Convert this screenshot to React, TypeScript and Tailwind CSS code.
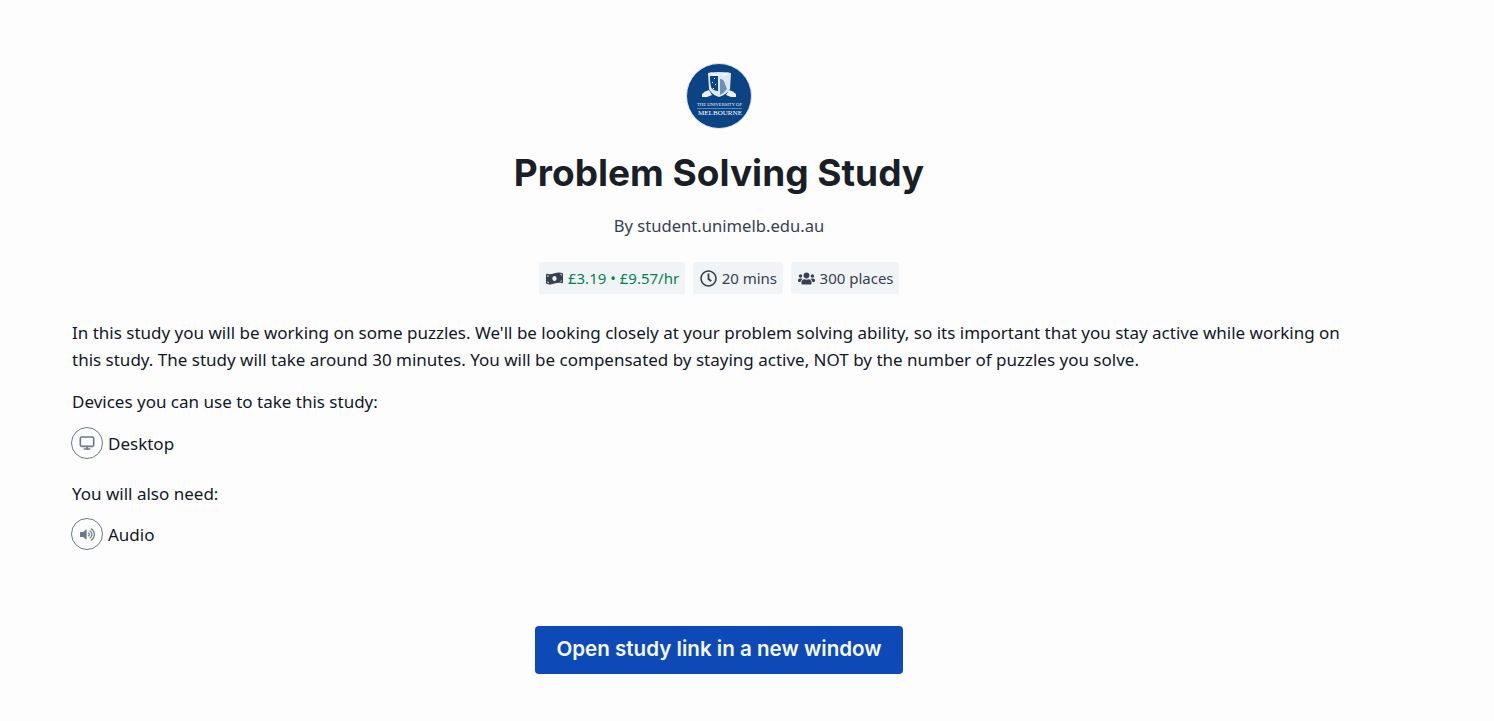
import { FaMoneyBillWave, FaRegClock, FaUsers, FaVolumeUp } from "react-icons/fa"
import { Monitor } from "lucide-react"

const bodyFont = "[font-family:'Noto_Sans',sans-serif]"

function Logo() {
    return <svg width="66" height="66" viewBox="0 0 66 66" className="block">
        <circle cx="33" cy="33" r="32.5" fill="#0b4485" stroke="#dfe5ee" strokeWidth="1" />
        {/* crest */}
        <g transform="translate(0 2)">
            <path d="M22 8 Q33 6 45 8 L44 24 Q40 30 33 32 Q26 30 23 24 Z" fill="#dfe8f2" />
            <path d="M24 11 H32 V26 Q28 26 25.5 23 Q24 20 24 11 Z" fill="#0b4485" />
            <path d="M28 13 h1 v1 h-1z M26 17 h1 v1 h-1z M29 19 h1 v1 h-1z M27 23 h1 v1 h-1z" fill="#ffffff" />
            <path d="M34 14 Q38 14 39 19 L41 24 Q38 28 34 30 Z" fill="#6f8fb5" />
            <path d="M33 10 L24 7 L27 11 Z M33 10 L43 7 L39 11 Z" fill="#f3f6fa" />
            <path d="M16 29 Q19 26 23 25 L26 30 L21 32 L16 32 Z" fill="#eef3f8" />
            <path d="M50 29 Q47 26 43 25 L40 30 L45 32 L50 32 Z" fill="#eef3f8" />
        </g>
        <text x="11" y="43" textLength="45" lengthAdjust="spacingAndGlyphs" fontSize="5" fill="#f3f6fa" fontFamily="'Liberation Serif', serif">THE UNIVERSITY OF</text>
        <rect x="11" y="45" width="45" height="0.5" fill="#b9c9dd" />
        <text x="12" y="52" textLength="44" lengthAdjust="spacingAndGlyphs" fontSize="7" fill="#ffffff" fontFamily="'Liberation Serif', serif">MELBOURNE</text>
    </svg>
}

function Tag({ children }: { children: React.ReactNode }) {
    return <div className="flex h-8 items-center gap-[5px] rounded-[3px] bg-[#f0f4f7] pt-px pr-[5.5px] pl-[7px] text-[15px] text-[#374151]">
        {children}
    </div>
}

function Requirement({ icon, label }: { icon: React.ReactNode; label: string }) {
    return <div className="-ml-px flex h-8 items-center gap-[5px]">
        <div className="flex h-8 w-8 items-center justify-center rounded-full border border-[#6b7a90] text-[#6b7a90]">
            {icon}
        </div>
        <span>{label}</span>
    </div>
}

export default function App() {
    return <div className={`flex h-[721px] w-full flex-col bg-[#fdfdfe] text-[17px] leading-[27px] text-[#111827] ${bodyFont}`}>
        <div className="flex w-[1438px] flex-col items-center pt-[63px]">
            <Logo />
            <h1 className="mt-[19px] text-[37px] leading-[50px] font-bold text-[#1a1f27] [font-family:Inter,sans-serif]">
                Problem Solving Study
            </h1>
            <div className="mt-[16px] text-[16.6px] leading-[24px] text-[#374151]">By student.unimelb.edu.au</div>
            <div className="mt-[24px] flex gap-2">
                <Tag>
                    <FaMoneyBillWave className="text-[17px] text-[#374151]" />
                    <span className="text-[#05824f]">£3.19 • £9.57/hr</span>
                </Tag>
                <Tag>
                    <FaRegClock className="text-[17px]" />
                    <span>20 mins</span>
                </Tag>
                <Tag>
                    <FaUsers className="text-[17px]" />
                    <span>300 places</span>
                </Tag>
            </div>
        </div>

        <div className="mt-[25px] w-[1366px] pl-[72px]">
            <p>
                In this study you will be working on some puzzles. We'll be looking closely at your problem solving ability, so its important that you stay active while working on this study. The study will take around 30 minutes. You will be compensated by staying active, NOT by the number of puzzles you solve.
            </p>
            <p className="mt-[15px]">Devices you can use to take this study:</p>
            <div className="mt-[12px]">
                <Requirement icon={<Monitor size={16} strokeWidth={2.5} />} label="Desktop" />
            </div>
            <p className="mt-[21px]">You will also need:</p>
            <div className="mt-[11px]">
                <Requirement icon={<FaVolumeUp size={15} />} label="Audio" />
            </div>
        </div>

        <div className="mt-[76px] flex w-[1438px] justify-center">
            <button className="h-12 w-[368px] rounded-[4px] bg-[#0d4ab8] pb-[3px] text-[20.6px] font-semibold text-[#f5f8ff] [font-family:Inter,sans-serif]">
                Open study link in a new window
            </button>
        </div>
    </div>
}
